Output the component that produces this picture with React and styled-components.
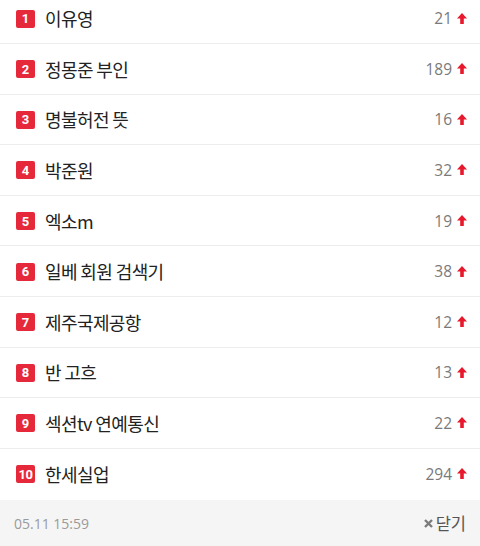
import React from 'react';
import styled, { createGlobalStyle } from 'styled-components';

const GlobalStyle = createGlobalStyle`
  html, body {
    margin: 0;
    padding: 0;
    background: #fff;
    font-family: "Noto Sans CJK KR", "Noto Sans", sans-serif;
    overflow: hidden;
  }
`;

const Panel = styled.div`
  width: 480px;
  height: 546px;
  display: flex;
  flex-direction: column;
  overflow: hidden;
  background: #fff;
`;

const List = styled.ul`
  list-style: none;
  margin: -6.6px 0 0;
  padding: 0;
  flex: 1;
`;

const Row = styled.li`
  display: flex;
  align-items: center;
  height: 49.6px;
  padding: 0 13px 0 16px;
  border-bottom: 1px solid #ededed;
  &:last-child {
    border-bottom: none;
  }
`;

const Badge = styled.span`
  display: inline-flex;
  align-items: center;
  justify-content: center;
  min-width: 19px;
  height: 18px;
  padding: 0 1px;
  box-sizing: border-box;
  border-radius: 2px;
  background: #e5293b;
  color: #fff;
  font-family: "Roboto", "Noto Sans", sans-serif;
  font-weight: 700;
  font-size: 13px;
  letter-spacing: ${(p) => (p.wide ? '-0.5px' : '0')};
  margin-top: 1px;
`;

const Keyword = styled.span`
  flex: 1;
  margin-left: 10px;
  font-size: 18px;
  color: #222;
  letter-spacing: -0.6px;
  line-height: 1;
`;

const Count = styled.span`
  font-family: "Open Sans", "Noto Sans", sans-serif;
  font-size: 15.5px;
  color: #7a7a7a;
  margin-right: 5px;
`;

const Arrow = styled.svg`
  width: 10px;
  height: 11px;
  display: block;
`;

const Footer = styled.div`
  height: 46px;
  background: #f5f5f5;
  display: flex;
  align-items: center;
  justify-content: space-between;
  padding: 0 14px 0 14px;
`;

const Time = styled.span`
  font-family: "Open Sans", "Noto Sans", sans-serif;
  font-size: 14px;
  color: #9a9a9a;
`;

const Close = styled.button`
  display: flex;
  align-items: center;
  gap: 2px;
  background: none;
  border: none;
  padding: 0;
  font-family: "Noto Sans CJK KR", "Noto Sans", sans-serif;
  font-size: 16.5px;
  color: #555;
  cursor: pointer;
`;

const items = [
  ['이유영', 21],
  ['정몽준 부인', 189],
  ['명불허전 뜻', 16],
  ['박준원', 32],
  ['엑소m', 19],
  ['일베 회원 검색기', 38],
  ['제주국제공항', 12],
  ['반 고흐', 13],
  ['섹션tv 연예통신', 22],
  ['한세실업', 294],
];

function UpArrow() {
  return (
    <Arrow viewBox="0 0 10 11">
      <path d="M5 0 L10 5.5 L6.8 5.5 L6.8 11 L3.2 11 L3.2 5.5 L0 5.5 Z" fill="#e8192c" />
    </Arrow>
  );
}

export default function App() {
  return (
    <Panel>
      <GlobalStyle />
      <List>
        {items.map(([word, n], i) => (
          <Row key={word}>
            <Badge wide={i === 9}>{i + 1}</Badge>
            <Keyword>{word}</Keyword>
            <Count>{n}</Count>
            <UpArrow />
          </Row>
        ))}
      </List>
      <Footer>
        <Time>05.11 15:59</Time>
        <Close>
          <svg width="11" height="11" viewBox="0 0 11 11">
            <path d="M2 2 L9 9 M9 2 L2 9" stroke="#7b7b7b" strokeWidth="2.4" strokeLinecap="butt" />
          </svg>
          닫기
        </Close>
      </Footer>
    </Panel>
  );
}
